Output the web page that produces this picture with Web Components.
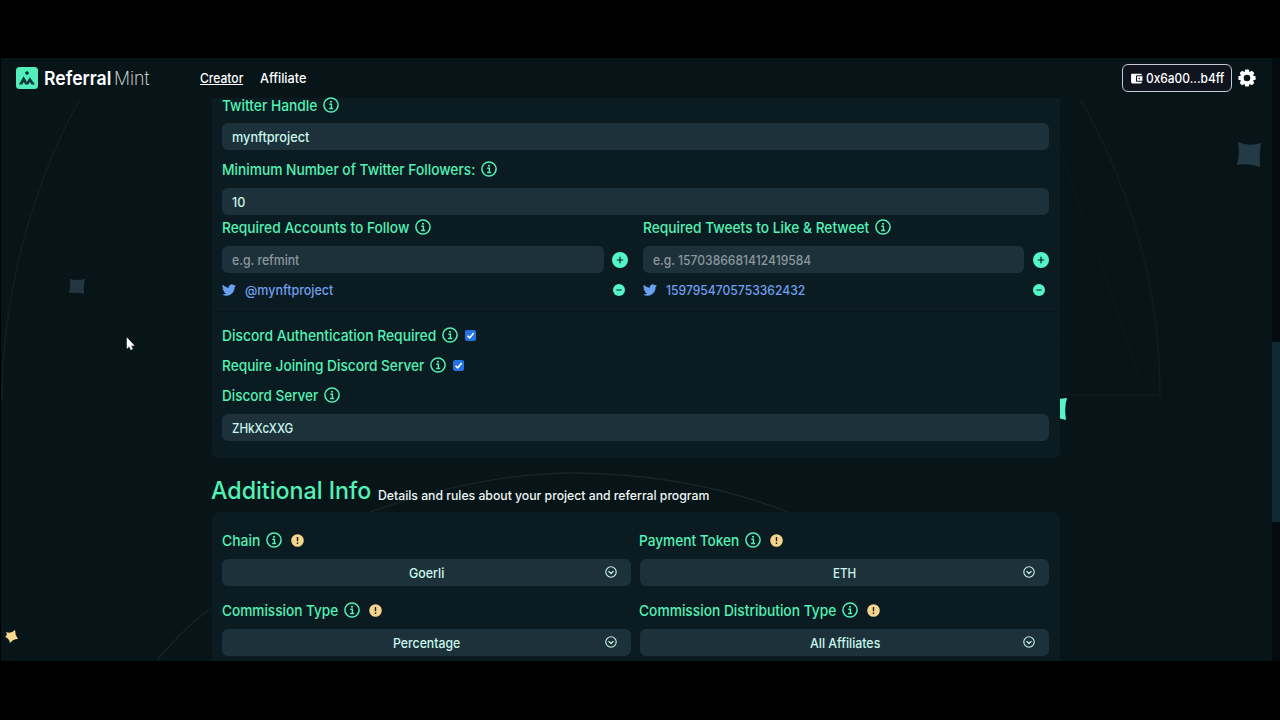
<!DOCTYPE html>
<html lang="en">
<head>
<meta charset="utf-8">
<title>Referral Mint</title>
<style>
html,body{margin:0;height:100%;background:#000;overflow:hidden}
body{font-family:Inter,"Liberation Sans",sans-serif;font-weight:500;color:#fff}
</style>
</head>
<body>
<rm-app></rm-app>
<script>
const def=(name,html,setup)=>customElements.define(name,class extends HTMLElement{
  constructor(){super();this.attachShadow({mode:'open'}).innerHTML=html;}
  connectedCallback(){if(setup)setup(this,this.shadowRoot);}
});

/* Single line of text, condensed so that it fills the width given in "w". */
def('fit-text','<style>:host{display:inline-block;white-space:pre;flex:none}span{display:inline-block;transform-origin:0 50%}</style><span><slot></slot></span>',(el,r)=>{
  const w=parseFloat(el.getAttribute('w'));
  const s=r.querySelector('span');
  const nat=s.getBoundingClientRect().width;
  s.style.transform='scaleX('+(w+.3)/nat+')';
  el.style.width=w+'px';
});

const icons={
 info:['0 0 16 16','<circle cx="8" cy="8" r="7.1" fill="none" stroke="currentColor" stroke-width="1.5"/><circle cx="8" cy="4.7" r="1.05" fill="currentColor"/><path d="M6.3 7.3h2.1v4M6.1 11.5h4" fill="none" stroke="currentColor" stroke-width="1.4"/>'],
 warn:['0 0 13 13','<circle cx="6.5" cy="6.5" r="6.3" fill="#f4d58d"/><path d="M6.5 3v4.3M6.5 8.6v1.5" stroke="#1a2020" stroke-width="1.4"/>'],
 plus:['0 0 16 16','<circle cx="8" cy="8" r="8" fill="#54f5c6"/><path d="M8 4.8v6.4M4.8 8h6.4" stroke="#0b1d22" stroke-width="1.2"/>'],
 minus:['0 0 12 12','<circle cx="6" cy="6" r="6" fill="#54f5c6"/><path d="M3.4 6h5.2" stroke="#0b1d22" stroke-width="1"/>'],
 bird:['0 0 24 24','<path fill="#69a0f2" d="M23.95 4.57a10 10 0 0 1-2.82.78 4.96 4.96 0 0 0 2.16-2.73c-.95.56-2 .96-3.13 1.19a4.92 4.92 0 0 0-8.38 4.48C7.69 8.1 4.07 6.13 1.64 3.16a4.92 4.92 0 0 0 1.52 6.57 4.9 4.9 0 0 1-2.23-.61v.06a4.92 4.92 0 0 0 3.95 4.83 5 5 0 0 1-2.21.08 4.94 4.94 0 0 0 4.6 3.42A9.87 9.87 0 0 1 0 19.54a13.99 13.99 0 0 0 7.55 2.21c9.05 0 14-7.5 14-13.98 0-.21 0-.42-.02-.63a9.94 9.94 0 0 0 2.42-2.57z"/>'],
 chev:['0 0 12 12','<circle cx="6" cy="6" r="5.2" fill="none" stroke="currentColor" stroke-width="1.1"/><path d="M3.5 5.1L6 7.5l2.5-2.4" fill="none" stroke="currentColor" stroke-width="1.3"/>'],
 check:['0 0 11 11','<rect width="11" height="11" rx="2" fill="#2573e0"/><path d="M2.5 5.7l2.2 2.2 3.9-5" fill="none" stroke="#fff" stroke-width="1.6"/>'],
 logo:['0 0 22 22','<rect width="22" height="22" rx="3.5" fill="#54eebb"/><path d="M11 3.800l2.200 2.200-2.200 2.200-2.200-2.200z" fill="#0b3a3a"/><path d="M2.900 17.600L7.600 9.200l3.400 5.600 2.800-4.600 5.200 7.400h-3.400l-1.700-2.600-1.500 2.600H9.200L7.800 15l-1.500 2.600z" fill="#0b3a3a"/>'],
 wallet:['0 0 24 24','<path fill="#fff" d="M22 18v1c0 1.100-.9 2-2 2H4a2 2 0 0 1-2-2V5c0-1.100.9-2 2-2h16c1.100 0 2 .9 2 2v1h-9a2 2 0 0 0-2 2v8c0 1.100.9 2 2 2h9zm-9-2h10V8H13v8zm4-2.500a1.500 1.500 0 1 1 0-3 1.500 1.500 0 0 1 0 3z"/>'],
 gear:['-9 -9 18 18','<g fill="#fff"><path id="t" d="M-1.700-8.600h3.400l1.100 3.600h-5.600zM-1.700 8.600h3.400l1.100-3.600h-5.600z"/><use href="#t" transform="rotate(45)"/><use href="#t" transform="rotate(90)"/><use href="#t" transform="rotate(135)"/></g><circle r="4.900" fill="none" stroke="#fff" stroke-width="3.200"/>']
};
def('rm-icon','<style>:host{display:block;flex:none}svg{display:block;width:100%;height:100%}</style><svg></svg>',(el,r)=>{
  const [vb,body]=icons[el.getAttribute('name')];
  const s=r.querySelector('svg');s.setAttribute('viewBox',vb);s.innerHTML=body;
  const z=el.getAttribute('size');el.style.width=z+'px';el.style.height=z+'px';
});

/* Field label: text, an info icon, and an optional trailing icon. */
def('rm-label','<style>:host{display:flex;align-items:center;height:20px;color:#52f2b6;font-size:14.8px;line-height:20px}fit-text{padding-top:1px}.i{margin-left:6.400px}</style><fit-text></fit-text><rm-icon class="i" name="info" size="16"></rm-icon><slot></slot>',(el,r)=>{
  const old=r.querySelector('fit-text'),t=document.createElement('fit-text');
  t.setAttribute('w',el.getAttribute('w'));t.textContent=el.getAttribute('text');old.replaceWith(t);
});
def('rm-input','<style>:host{display:flex;box-sizing:border-box;height:27px;padding:0 10.400px;align-items:center;border-radius:6px;background:#1d313a;color:#c9f7ec;font-size:13.3px;line-height:20px}:host([hint]){color:#8b979d}</style><slot></slot>');
def('rm-select','<style>:host{display:grid;grid-template-columns:1fr auto 1fr;box-sizing:border-box;height:27px;padding:0 13.600px;align-items:center;border-radius:6px;background:#1d313a;color:#c9f7ec;font-size:13.3px;line-height:18px}.t{grid-column:2}rm-icon{justify-self:end;margin-top:-1px}</style><div class="t"><slot></slot></div><rm-icon name="chev" size="12"></rm-icon>');
def('rm-entry','<style>:host{display:flex;align-items:center;height:20px;color:#6f9fee;font-size:13.3px;line-height:20px}.t{margin-left:9px;flex:1;display:flex}.m{margin-right:4px}</style><rm-icon name="bird" size="14"></rm-icon><div class="t"><slot></slot></div><rm-icon class="m" name="minus" size="12"></rm-icon>');

def('rm-nav',`<style>
:host{display:flex;box-sizing:border-box;height:40px;align-items:center;padding:0 24.500px 0 15px;font-size:13px;line-height:20px}
.name{display:flex;align-items:baseline;margin-left:6px;font-size:19px;font-weight:600;line-height:24px;margin-top:2px}
.mint{font-weight:200;margin-left:3px;color:#e4e8ea}
.links{display:flex;gap:17px;margin-left:51px;flex:1}
.on{border-bottom:1px solid #fff;height:16px}
.links fit-text{line-height:20px}
.wallet{display:flex;box-sizing:border-box;width:110px;height:28px;border:1px solid #c3cbd0;border-radius:6px;align-items:center;background:#10141f;padding-left:7px;gap:3px}
.gear{margin-left:6px}
</style>
<rm-icon name="logo" size="22"></rm-icon>
<div class="name"><fit-text w="67">Referral</fit-text><fit-text class="mint" w="35">Mint</fit-text></div>
<div class="links"><fit-text class="on" w="43">Creator</fit-text><fit-text w="46">Affiliate</fit-text></div>
<div class="wallet"><rm-icon name="wallet" size="13"></rm-icon><fit-text w="78">0x6a00...b4ff</fit-text></div>
<rm-icon class="gear" name="gear" size="18"></rm-icon>`);

def('rm-backdrop',`<style>:host{display:block;position:absolute;inset:0}svg{display:block}</style>
<svg width="1279" height="603" viewBox="1 58 1279 603">
<g fill="none" stroke="#172527" stroke-width="1.4">
<path d="M80 99C35 180 3 285 2 400" opacity=".7"/><path d="M1080 99C1132 190 1160 290 1160 397" opacity=".6"/><path d="M1060 148L1141 380M1060 338L1160 397M1060 395H1160" opacity=".3"/>
<path d="M157 660Q190 622 212 608"/><path d="M370 512Q480 473 575 473Q690 474 788 512"/></g>
<path d="M1238 142Q1249 147 1261 143Q1259 155 1260 167Q1250 163 1237 165Q1240 154 1238 142z" fill="#243a44"/>
<path d="M70 279Q77 281 85 279Q83 286 84 294Q77 292 69 293Q71 286 70 279z" fill="#243640"/>
<path d="M6 632Q11 634 15 630Q15 635 18 639Q13 639 10 643Q9 638 5 637Q8 635 6 632z" fill="#fbd98f"/>
<path d="M1058 399L1067 398Q1064 408 1066 420L1058 418z" fill="#54f5c6"/>
</svg>`);

def('rm-app',`<style>
:host{display:block;box-sizing:border-box;width:1280px;height:720px;padding:58px 0 59px 1px;background:#000}
.view{position:relative;display:flex;flex-direction:column;height:603px;overflow:hidden;background:#071418}
rm-nav{position:relative;flex:none}
.bar{position:absolute;right:0;top:0;width:8px;height:603px;background:#030b0e}
.bar i{display:block;margin-top:284px;height:180px;background:#102932}
main{position:relative;flex:none;width:848px;margin-left:211px}
.card{box-sizing:border-box;background:#0a1c21;padding:0 11px 0 10px}
.a{height:360px;border-radius:0 0 6px 6px;display:flex;flex-direction:column}
.sep{height:1px;margin:0 -11px 0 -10px;background:#071519}
.two{display:grid;grid-template-columns:1fr 1fr;column-gap:14px}
.add{display:flex;align-items:center;gap:8.500px}
.add rm-input{flex:1}
.add rm-icon{margin-right:.5px}
.h{display:flex;align-items:baseline;height:54px;line-height:66px;font-size:24px;color:#52f2b6}
.h .s{font-size:12.800px;color:#f0f5f5;margin-left:6.400px;position:relative;top:1px}
.h fit-text:first-child{margin-left:-.6px}
.b{height:170px;border-radius:6px 6px 0 0;padding-top:18px}
.g{display:grid;grid-template-columns:409px 410px;column-gap:8px;row-gap:14px}
.g rm-label{margin-bottom:9px}
.g>:nth-child(even) rm-select{margin-left:1px}
.w{margin-left:8.500px}.c{margin-left:7px}
.pointer{position:absolute;left:125px;top:279px}
</style>
<div class="view">
<rm-backdrop></rm-backdrop>
<rm-nav></rm-nav>
<main>
<section class="card a">
 <rm-label text="Twitter Handle" w="95" style="margin-top:-3px"></rm-label>
 <rm-input style="margin-top:8px"><fit-text w="77">mynftproject</fit-text></rm-input>
 <rm-label text="Minimum Number of Twitter Followers:" w="253" style="margin-top:9px"></rm-label>
 <rm-input style="margin-top:9px"><fit-text w="13">10</fit-text></rm-input>
 <div class="two" style="margin-top:2px">
  <div><rm-label text="Required Accounts to Follow" w="187"></rm-label>
   <div class="add" style="margin-top:9px"><rm-input hint><fit-text w="67">e.g. refmint</fit-text></rm-input><rm-icon name="plus" size="16"></rm-icon></div>
   <rm-entry style="margin-top:7px"><fit-text w="88">@mynftproject</fit-text></rm-entry></div>
  <div><rm-label text="Required Tweets to Like &amp; Retweet" w="226"></rm-label>
   <div class="add" style="margin-top:9px"><rm-input hint><fit-text w="158">e.g. 1570386681412419584</fit-text></rm-input><rm-icon name="plus" size="16"></rm-icon></div>
   <rm-entry style="margin-top:7px"><fit-text w="139">1597954705753362432</fit-text></rm-entry></div>
 </div>
 <div class="sep" style="margin-top:11px"></div>
 <rm-label text="Discord Authentication Required" w="214" style="margin-top:13px"><rm-icon class="c" name="check" size="11"></rm-icon></rm-label>
 <rm-label text="Require Joining Discord Server" w="202" style="margin-top:10px"><rm-icon class="c" name="check" size="11"></rm-icon></rm-label>
 <rm-label text="Discord Server" w="96" style="margin-top:10px"></rm-label>
 <rm-input style="margin-top:9px"><fit-text w="61">ZHkXcXXG</fit-text></rm-input>
</section>
<div class="h"><fit-text w="160">Additional Info</fit-text><fit-text class="s" w="331">Details and rules about your project and referral program</fit-text></div>
<section class="card b"><div class="g">
 <div><rm-label text="Chain" w="38"><rm-icon class="w" name="warn" size="13"></rm-icon></rm-label><rm-select><fit-text w="35">Goerli</fit-text></rm-select></div>
 <div><rm-label text="Payment Token" w="100"><rm-icon class="w" name="warn" size="13"></rm-icon></rm-label><rm-select><fit-text w="23">ETH</fit-text></rm-select></div>
 <div><rm-label text="Commission Type" w="116"><rm-icon class="w" name="warn" size="13"></rm-icon></rm-label><rm-select><fit-text w="67">Percentage</fit-text></rm-select></div>
 <div><rm-label text="Commission Distribution Type" w="197"><rm-icon class="w" name="warn" size="13"></rm-icon></rm-label><rm-select><fit-text w="70">All Affiliates</fit-text></rm-select></div>
</div></section>
</main>
<div class="bar"><i></i></div>
<svg class="pointer" width="9" height="14" viewBox="0 0 9 14"><path d="M1 .8v10.600l2.300-2.200 1.500 3.500 1.700-.7-1.500-3.400h3.200z" fill="#fff" stroke="#fff" stroke-width=".5"/></svg>
</div>`);
</script>
</body>
</html>
